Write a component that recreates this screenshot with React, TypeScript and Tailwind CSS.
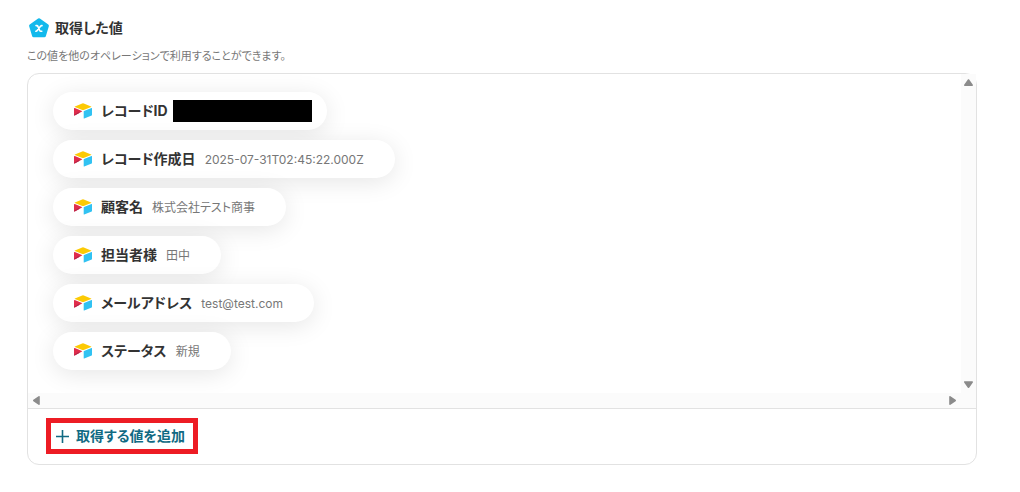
import React from 'react';

interface Field {
  label: string;
  value?: string;
}

const fields: Field[] = [
  { label: 'レコードID' },
  { label: 'レコード作成日', value: '2025-07-31T02:45:22.000Z' },
  { label: '顧客名', value: '株式会社テスト商事' },
  { label: '担当者様', value: '田中' },
  { label: 'メールアドレス', value: 'test@test.com' },
  { label: 'ステータス', value: '新規' },
];

const ValueIcon: React.FC = () => (
  <svg width="22" height="22" viewBox="0 0 22 22" aria-hidden="true">
    <path
      d="M11 2.7 19.4 8.8 16.4 18.8H5.6L2.6 8.8Z"
      fill="#12b9ec"
      stroke="#12b9ec"
      strokeWidth="3"
      strokeLinejoin="round"
    />
    <path
      d="M8 8.6H8.8Q9.6 8.6 9.9 9.4L11.6 13.2Q12 14.3 12.8 14.3H13.8M14 8.6Q13.2 8.5 12.5 9.3L9.2 13.5Q8.7 14.2 7.9 14.3"
      fill="none"
      stroke="#fff"
      strokeWidth="1.6"
      strokeLinecap="round"
    />
  </svg>
);

const AirtableIcon: React.FC = () => (
  <svg width="18" height="16" viewBox="0 0 18 16" className="shrink-0" aria-hidden="true">
    <path d="M8.2.5.9 3.4Q.3 3.7.9 4L8.3 6.9Q9 7.2 9.7 6.9L17.1 4Q17.7 3.7 17.1 3.4L9.8.5Q9 .2 8.2.5Z" fill="#fcca04" />
    <path d="M9.7 8.4V15.2Q9.7 15.7 10.2 15.5L17.7 12.6Q18 12.5 18 12.1V5.4Q18 4.9 17.5 5.1L10 8Q9.7 8.1 9.7 8.4Z" fill="#31c2f2" />
    <path d="M8 8.6 1.1 12.2Q0 12.7 0 12V5.6Q0 4.8.8 5.1L7.9 8Q8.4 8.3 8 8.6Z" fill="#e02d4b" />
    <path d="M5.8 9.7 1.1 12.2Q0 12.7 0 12V11.8L4.5 9Z" fill="#b7254a" />
  </svg>
);

const FieldPill: React.FC<Field> = ({ label, value }) => (
  <li
    className={`flex h-[38px] items-center rounded-full bg-white pl-[21px] shadow-[0_4px_24px_rgba(0,0,0,0.1)] ${
      value ? 'gap-[9px] pr-[31px]' : 'gap-[5px] pr-[15px]'
    }`}
  >
    <div className="flex items-center gap-[9px]">
      <AirtableIcon />
      <span className="pb-0.5 text-[14px] font-bold whitespace-nowrap text-[#333]">{label}</span>
    </div>
    {value ? (
      <span className="pt-0.5 text-[12px] whitespace-nowrap text-[#777]">{value}</span>
    ) : (
      <span className="h-[22px] w-[139px] bg-black" />
    )}
  </li>
);

const Arrow: React.FC<{ d: string }> = ({ d }) => (
  <svg width="11" height="11" viewBox="0 0 11 11" className="block" aria-hidden="true">
    <path d={d} fill="#8b8b8b" stroke="#8b8b8b" strokeWidth="1.6" strokeLinejoin="round" />
  </svg>
);

const App: React.FC = () => {
  return (
    <main className="bg-white pt-[17px] pr-[43px] pb-7 pl-[27px] font-['Inter','Noto_Sans_CJK_JP',sans-serif] [font-feature-settings:'palt']">
      <header>
        <div className="flex h-[22px] items-center gap-[5px] pl-px">
          <ValueIcon />
          <h1 className="pb-0.5 text-[14px] font-bold text-[#333]">取得した値</h1>
        </div>
        <p className="mt-2 text-[11px] leading-[18px] text-[#777]">
          この値を他のオペレーションで利用することができます。
        </p>
      </header>

      <section className="mt-2 rounded-xl border border-[#e2e2e2]">
        <div className="flex">
          <ul className="flex h-[319px] min-w-0 grow flex-col items-start gap-2.5 overflow-hidden pt-[18px] pl-[25px]">
            {fields.map((field) => (
              <FieldPill key={field.label} {...field} />
            ))}
          </ul>
          <div className="flex w-[15px] flex-col items-center justify-between bg-[#fbfbfb] py-[3px]">
            <button type="button" aria-label="上へ">
              <Arrow d="M5.5 3 9.2 8.2H1.8Z" />
            </button>
            <button type="button" aria-label="下へ">
              <Arrow d="M1.8 3H9.2L5.5 8.2Z" />
            </button>
          </div>
        </div>
        <div className="flex h-[15px] items-center justify-between bg-[#fbfbfb] pr-[18px] pl-[3px]">
          <button type="button" aria-label="左へ">
            <Arrow d="M8 1.8V9.2L2.8 5.5Z" />
          </button>
          <button type="button" aria-label="右へ">
            <Arrow d="M3 1.8V9.2L8.2 5.5Z" />
          </button>
        </div>
        <div className="border-t border-[#e2e2e2] px-[18px] pt-[9px] pb-2.5">
          <button
            type="button"
            className="flex h-9 items-center gap-[7px] border-[5px] border-[#ed1c24] pr-2 pl-[5px] text-[14px] font-bold text-[#116a83]"
          >
            <svg width="13" height="13" viewBox="0 0 13 13" aria-hidden="true">
              <path d="M6.5 0V13M0 6.5H13" stroke="currentColor" strokeWidth="1.6" />
            </svg>
            <span className="pb-0.5">取得する値を追加</span>
          </button>
        </div>
      </section>
    </main>
  );
};

export default App;
